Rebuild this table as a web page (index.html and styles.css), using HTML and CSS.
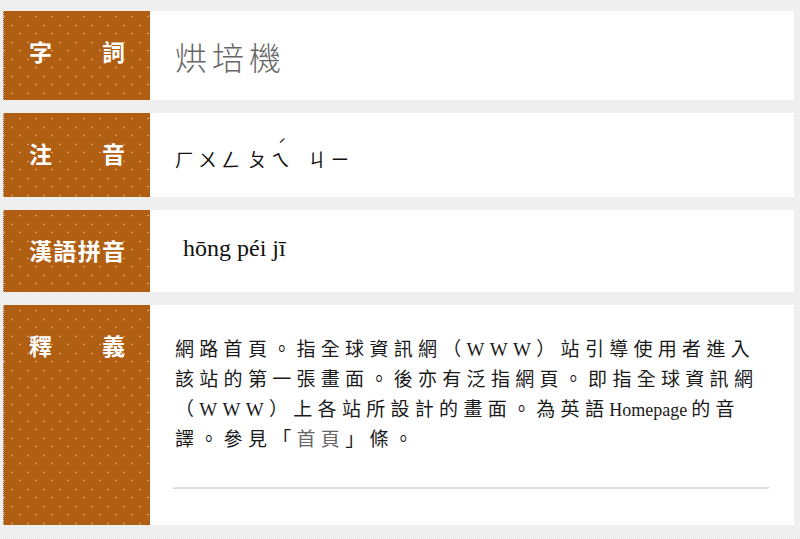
FILE: index.html
```html
<!DOCTYPE html>
<html lang="zh-Hant">
<head>
<meta charset="utf-8">
<title>烘培機</title>
<link rel="stylesheet" href="styles.css">
</head>
<body>
<main class="entry">
  <section class="row row-word">
    <div class="label"><span>字</span><span>詞</span></div>
    <div class="content"><span class="word">烘培機</span></div>
  </section>
  <section class="row row-zhuyin">
    <div class="label"><span>注</span><span>音</span></div>
    <div class="content zhuyin">
      <span class="syl">ㄏㄨㄥ</span>
      <span class="syl">ㄆㄟ<span class="tone">ˊ</span></span>
      <span class="syl">ㄐㄧ</span>
    </div>
  </section>
  <section class="row row-pinyin">
    <div class="label"><span>漢</span><span>語</span><span>拼</span><span>音</span></div>
    <div class="content"><span class="pinyin">hōng péi jī</span></div>
  </section>
  <section class="row row-def">
    <div class="label"><span>釋</span><span>義</span></div>
    <div class="content def">
      <p class="def-text">網路首頁。指全球資訊網（<span class="latin">WWW</span>）站引導使用者進入<br>該站的第一張畫面。後亦有泛指網頁。即指全球資訊網<br>（<span class="latin">WWW</span>）上各站所設計的畫面。為英語<span class="latin-word">Homepage</span>的音<br>譯。參見「<span class="ref">首頁</span>」條。</p>
      <div class="sep"></div>
    </div>
  </section>
</main>
</body>
</html>
```
FILE: styles.css
```css
html, body {
  margin: 0;
  padding: 0;
}
body {
  width: 800px;
  height: 539px;
  overflow: hidden;
  background-color: #efefef;
  background-image: repeating-conic-gradient(#e6e6e6 0 25%, #f8f8f8 0 50%);
  background-size: 2px 2px;
  font-family: "Liberation Serif", "Noto Sans CJK TC", serif;
}
.entry {
  display: flex;
  flex-direction: column;
  gap: 13px;
  padding: 11px 6px 0 3px;
}
.row {
  display: flex;
  align-items: stretch;
}
.label {
  width: 147px;
  box-sizing: border-box;
  flex: none;
  display: flex;
  justify-content: space-between;
  align-items: flex-start;
  padding: 29px 25px 0 25px;
  background-color: #b05e12;
  background-image:
    radial-gradient(circle, rgba(255, 205, 160, 0.55) 0.7px, transparent 1.2px),
    radial-gradient(circle, rgba(255, 205, 160, 0.55) 0.7px, transparent 1.2px);
  background-size: 16px 17px, 16px 17px;
  background-position: 0 6px, 8px 14px;
  border-left: 1px dotted #cfcfcf;
  color: #fff;
  font-family: "Noto Sans CJK TC", sans-serif;
  font-weight: 700;
  font-size: 23px;
  line-height: 23px;
}
.content {
  flex: 1;
  background: #fff;
  padding-left: 25px;
  box-sizing: border-box;
}
.row-word .content {
  padding-top: 29px;
  height: 89px;
}
.word {
  display: block;
  font-family: "Noto Sans CJK TC", sans-serif;
  font-weight: 300;
  font-size: 32px;
  line-height: 32px;
  color: #666;
  letter-spacing: 5px;
}
.row-zhuyin .content {
  height: 84px;
  padding-top: 31px;
}
.zhuyin {
  display: flex;
  align-items: baseline;
  gap: 4px;
  white-space: nowrap;
  font-family: "Noto Sans CJK TC", sans-serif;
  font-size: 19px;
  line-height: 20px;
  color: #111;
}
.syl {
  white-space: nowrap;
  letter-spacing: 4px;
}
.tone {
  font-size: 14px;
  line-height: 0;
  vertical-align: 17px;
  margin-left: -16px;
  margin-right: 17px;
  letter-spacing: 0;
}
.row-pinyin .content {
  height: 82px;
  padding-top: 26px;
  padding-left: 33px;
}
.pinyin {
  display: block;
  font-family: "Liberation Serif", serif;
  font-size: 24px;
  line-height: 24px;
  color: #111;
}
.def {
  padding: 30px 6px 36px 25px;
}
.def-text {
  margin: 0;
  white-space: nowrap;
  font-family: "Liberation Serif", "Noto Sans CJK TC", serif;
  font-size: 19px;
  line-height: 30px;
  letter-spacing: 5.3px;
  color: #1a1a1a;
}
.latin {
  font-size: 19px;
}
.latin-word {
  font-size: 18px;
  letter-spacing: 0;
  margin-right: 4px;
}
.ref {
  color: #666;
}
.sep {
  height: 2px;
  margin: 32px 19px 0 -2px;
  background-image: repeating-conic-gradient(#d0d0d0 0 25%, #f2f2f2 0 50%);
  background-size: 2px 2px;
}
```
